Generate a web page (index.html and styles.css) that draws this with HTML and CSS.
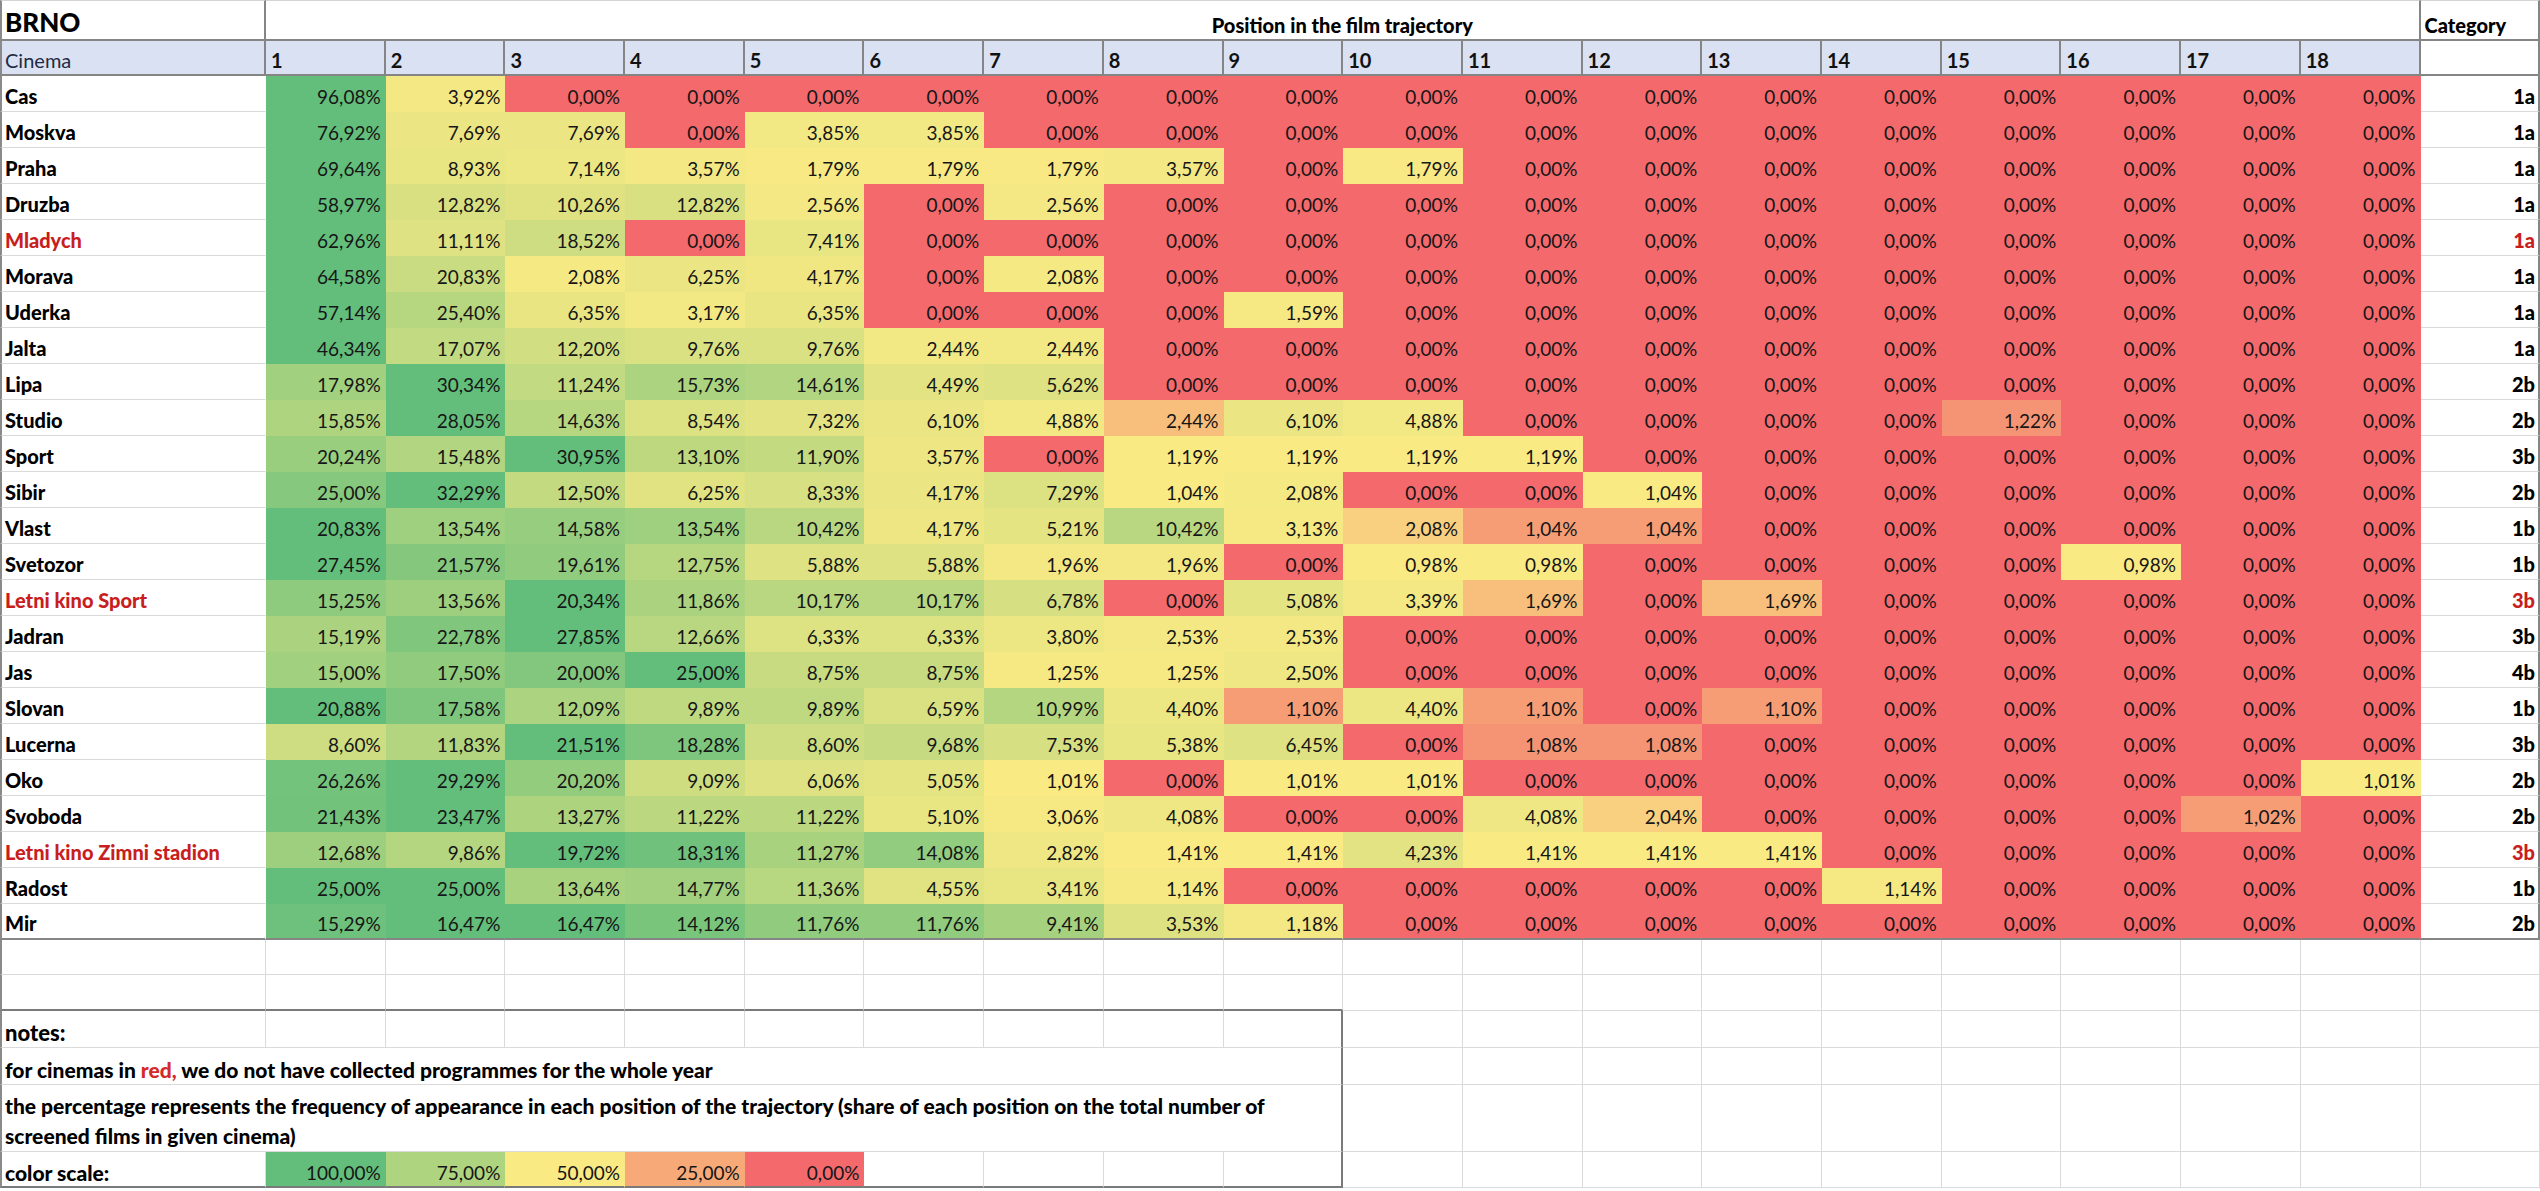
FILE: index.html
```html
<!DOCTYPE html>
<html lang="en">
<head>
<meta charset="utf-8">
<title>BRNO – Position in the film trajectory</title>
<link rel="stylesheet" href="styles.css">
</head>
<body>
<table class="sheet">
<colgroup>
<col class="c-name">
<col class="c-pos"><col class="c-pos"><col class="c-pos"><col class="c-pos"><col class="c-pos"><col class="c-pos">
<col class="c-pos"><col class="c-pos"><col class="c-pos"><col class="c-pos"><col class="c-pos"><col class="c-pos">
<col class="c-pos"><col class="c-pos"><col class="c-pos"><col class="c-pos"><col class="c-pos"><col class="c-pos">
<col class="c-cat">
</colgroup>
<tbody>
<tr class="title"><td class="brno">BRNO</td><td class="traj" colspan="18">Position in the film trajectory</td><td class="cathead">Category</td></tr>
<tr class="head"><td class="cinema">Cinema</td><td>1</td><td>2</td><td>3</td><td>4</td><td>5</td><td>6</td><td>7</td><td>8</td><td>9</td><td>10</td><td>11</td><td>12</td><td>13</td><td>14</td><td>15</td><td>16</td><td>17</td><td>18</td><td class="blank"></td></tr>

<tr class="data"><td class="name">Cas</td><td class="v">96,08%</td><td class="v">3,92%</td><td class="v">0,00%</td><td class="v">0,00%</td><td class="v">0,00%</td><td class="v">0,00%</td><td class="v">0,00%</td><td class="v">0,00%</td><td class="v">0,00%</td><td class="v">0,00%</td><td class="v">0,00%</td><td class="v">0,00%</td><td class="v">0,00%</td><td class="v">0,00%</td><td class="v">0,00%</td><td class="v">0,00%</td><td class="v">0,00%</td><td class="v">0,00%</td><td class="cat">1a</td></tr>
<tr class="data"><td class="name">Moskva</td><td class="v">76,92%</td><td class="v">7,69%</td><td class="v">7,69%</td><td class="v">0,00%</td><td class="v">3,85%</td><td class="v">3,85%</td><td class="v">0,00%</td><td class="v">0,00%</td><td class="v">0,00%</td><td class="v">0,00%</td><td class="v">0,00%</td><td class="v">0,00%</td><td class="v">0,00%</td><td class="v">0,00%</td><td class="v">0,00%</td><td class="v">0,00%</td><td class="v">0,00%</td><td class="v">0,00%</td><td class="cat">1a</td></tr>
<tr class="data"><td class="name">Praha</td><td class="v">69,64%</td><td class="v">8,93%</td><td class="v">7,14%</td><td class="v">3,57%</td><td class="v">1,79%</td><td class="v">1,79%</td><td class="v">1,79%</td><td class="v">3,57%</td><td class="v">0,00%</td><td class="v">1,79%</td><td class="v">0,00%</td><td class="v">0,00%</td><td class="v">0,00%</td><td class="v">0,00%</td><td class="v">0,00%</td><td class="v">0,00%</td><td class="v">0,00%</td><td class="v">0,00%</td><td class="cat">1a</td></tr>
<tr class="data"><td class="name">Druzba</td><td class="v">58,97%</td><td class="v">12,82%</td><td class="v">10,26%</td><td class="v">12,82%</td><td class="v">2,56%</td><td class="v">0,00%</td><td class="v">2,56%</td><td class="v">0,00%</td><td class="v">0,00%</td><td class="v">0,00%</td><td class="v">0,00%</td><td class="v">0,00%</td><td class="v">0,00%</td><td class="v">0,00%</td><td class="v">0,00%</td><td class="v">0,00%</td><td class="v">0,00%</td><td class="v">0,00%</td><td class="cat">1a</td></tr>
<tr class="data red"><td class="name">Mladych</td><td class="v">62,96%</td><td class="v">11,11%</td><td class="v">18,52%</td><td class="v">0,00%</td><td class="v">7,41%</td><td class="v">0,00%</td><td class="v">0,00%</td><td class="v">0,00%</td><td class="v">0,00%</td><td class="v">0,00%</td><td class="v">0,00%</td><td class="v">0,00%</td><td class="v">0,00%</td><td class="v">0,00%</td><td class="v">0,00%</td><td class="v">0,00%</td><td class="v">0,00%</td><td class="v">0,00%</td><td class="cat">1a</td></tr>
<tr class="data"><td class="name">Morava</td><td class="v">64,58%</td><td class="v">20,83%</td><td class="v">2,08%</td><td class="v">6,25%</td><td class="v">4,17%</td><td class="v">0,00%</td><td class="v">2,08%</td><td class="v">0,00%</td><td class="v">0,00%</td><td class="v">0,00%</td><td class="v">0,00%</td><td class="v">0,00%</td><td class="v">0,00%</td><td class="v">0,00%</td><td class="v">0,00%</td><td class="v">0,00%</td><td class="v">0,00%</td><td class="v">0,00%</td><td class="cat">1a</td></tr>
<tr class="data"><td class="name">Uderka</td><td class="v">57,14%</td><td class="v">25,40%</td><td class="v">6,35%</td><td class="v">3,17%</td><td class="v">6,35%</td><td class="v">0,00%</td><td class="v">0,00%</td><td class="v">0,00%</td><td class="v">1,59%</td><td class="v">0,00%</td><td class="v">0,00%</td><td class="v">0,00%</td><td class="v">0,00%</td><td class="v">0,00%</td><td class="v">0,00%</td><td class="v">0,00%</td><td class="v">0,00%</td><td class="v">0,00%</td><td class="cat">1a</td></tr>
<tr class="data"><td class="name">Jalta</td><td class="v">46,34%</td><td class="v">17,07%</td><td class="v">12,20%</td><td class="v">9,76%</td><td class="v">9,76%</td><td class="v">2,44%</td><td class="v">2,44%</td><td class="v">0,00%</td><td class="v">0,00%</td><td class="v">0,00%</td><td class="v">0,00%</td><td class="v">0,00%</td><td class="v">0,00%</td><td class="v">0,00%</td><td class="v">0,00%</td><td class="v">0,00%</td><td class="v">0,00%</td><td class="v">0,00%</td><td class="cat">1a</td></tr>
<tr class="data"><td class="name">Lipa</td><td class="v">17,98%</td><td class="v">30,34%</td><td class="v">11,24%</td><td class="v">15,73%</td><td class="v">14,61%</td><td class="v">4,49%</td><td class="v">5,62%</td><td class="v">0,00%</td><td class="v">0,00%</td><td class="v">0,00%</td><td class="v">0,00%</td><td class="v">0,00%</td><td class="v">0,00%</td><td class="v">0,00%</td><td class="v">0,00%</td><td class="v">0,00%</td><td class="v">0,00%</td><td class="v">0,00%</td><td class="cat">2b</td></tr>
<tr class="data"><td class="name">Studio</td><td class="v">15,85%</td><td class="v">28,05%</td><td class="v">14,63%</td><td class="v">8,54%</td><td class="v">7,32%</td><td class="v">6,10%</td><td class="v">4,88%</td><td class="v">2,44%</td><td class="v">6,10%</td><td class="v">4,88%</td><td class="v">0,00%</td><td class="v">0,00%</td><td class="v">0,00%</td><td class="v">0,00%</td><td class="v">1,22%</td><td class="v">0,00%</td><td class="v">0,00%</td><td class="v">0,00%</td><td class="cat">2b</td></tr>
<tr class="data"><td class="name">Sport</td><td class="v">20,24%</td><td class="v">15,48%</td><td class="v">30,95%</td><td class="v">13,10%</td><td class="v">11,90%</td><td class="v">3,57%</td><td class="v">0,00%</td><td class="v">1,19%</td><td class="v">1,19%</td><td class="v">1,19%</td><td class="v">1,19%</td><td class="v">0,00%</td><td class="v">0,00%</td><td class="v">0,00%</td><td class="v">0,00%</td><td class="v">0,00%</td><td class="v">0,00%</td><td class="v">0,00%</td><td class="cat">3b</td></tr>
<tr class="data"><td class="name">Sibir</td><td class="v">25,00%</td><td class="v">32,29%</td><td class="v">12,50%</td><td class="v">6,25%</td><td class="v">8,33%</td><td class="v">4,17%</td><td class="v">7,29%</td><td class="v">1,04%</td><td class="v">2,08%</td><td class="v">0,00%</td><td class="v">0,00%</td><td class="v">1,04%</td><td class="v">0,00%</td><td class="v">0,00%</td><td class="v">0,00%</td><td class="v">0,00%</td><td class="v">0,00%</td><td class="v">0,00%</td><td class="cat">2b</td></tr>
<tr class="data"><td class="name">Vlast</td><td class="v">20,83%</td><td class="v">13,54%</td><td class="v">14,58%</td><td class="v">13,54%</td><td class="v">10,42%</td><td class="v">4,17%</td><td class="v">5,21%</td><td class="v">10,42%</td><td class="v">3,13%</td><td class="v">2,08%</td><td class="v">1,04%</td><td class="v">1,04%</td><td class="v">0,00%</td><td class="v">0,00%</td><td class="v">0,00%</td><td class="v">0,00%</td><td class="v">0,00%</td><td class="v">0,00%</td><td class="cat">1b</td></tr>
<tr class="data"><td class="name">Svetozor</td><td class="v">27,45%</td><td class="v">21,57%</td><td class="v">19,61%</td><td class="v">12,75%</td><td class="v">5,88%</td><td class="v">5,88%</td><td class="v">1,96%</td><td class="v">1,96%</td><td class="v">0,00%</td><td class="v">0,98%</td><td class="v">0,98%</td><td class="v">0,00%</td><td class="v">0,00%</td><td class="v">0,00%</td><td class="v">0,00%</td><td class="v">0,98%</td><td class="v">0,00%</td><td class="v">0,00%</td><td class="cat">1b</td></tr>
<tr class="data red"><td class="name">Letni kino Sport</td><td class="v">15,25%</td><td class="v">13,56%</td><td class="v">20,34%</td><td class="v">11,86%</td><td class="v">10,17%</td><td class="v">10,17%</td><td class="v">6,78%</td><td class="v">0,00%</td><td class="v">5,08%</td><td class="v">3,39%</td><td class="v">1,69%</td><td class="v">0,00%</td><td class="v">1,69%</td><td class="v">0,00%</td><td class="v">0,00%</td><td class="v">0,00%</td><td class="v">0,00%</td><td class="v">0,00%</td><td class="cat">3b</td></tr>
<tr class="data"><td class="name">Jadran</td><td class="v">15,19%</td><td class="v">22,78%</td><td class="v">27,85%</td><td class="v">12,66%</td><td class="v">6,33%</td><td class="v">6,33%</td><td class="v">3,80%</td><td class="v">2,53%</td><td class="v">2,53%</td><td class="v">0,00%</td><td class="v">0,00%</td><td class="v">0,00%</td><td class="v">0,00%</td><td class="v">0,00%</td><td class="v">0,00%</td><td class="v">0,00%</td><td class="v">0,00%</td><td class="v">0,00%</td><td class="cat">3b</td></tr>
<tr class="data"><td class="name">Jas</td><td class="v">15,00%</td><td class="v">17,50%</td><td class="v">20,00%</td><td class="v">25,00%</td><td class="v">8,75%</td><td class="v">8,75%</td><td class="v">1,25%</td><td class="v">1,25%</td><td class="v">2,50%</td><td class="v">0,00%</td><td class="v">0,00%</td><td class="v">0,00%</td><td class="v">0,00%</td><td class="v">0,00%</td><td class="v">0,00%</td><td class="v">0,00%</td><td class="v">0,00%</td><td class="v">0,00%</td><td class="cat">4b</td></tr>
<tr class="data"><td class="name">Slovan</td><td class="v">20,88%</td><td class="v">17,58%</td><td class="v">12,09%</td><td class="v">9,89%</td><td class="v">9,89%</td><td class="v">6,59%</td><td class="v">10,99%</td><td class="v">4,40%</td><td class="v">1,10%</td><td class="v">4,40%</td><td class="v">1,10%</td><td class="v">0,00%</td><td class="v">1,10%</td><td class="v">0,00%</td><td class="v">0,00%</td><td class="v">0,00%</td><td class="v">0,00%</td><td class="v">0,00%</td><td class="cat">1b</td></tr>
<tr class="data"><td class="name">Lucerna</td><td class="v">8,60%</td><td class="v">11,83%</td><td class="v">21,51%</td><td class="v">18,28%</td><td class="v">8,60%</td><td class="v">9,68%</td><td class="v">7,53%</td><td class="v">5,38%</td><td class="v">6,45%</td><td class="v">0,00%</td><td class="v">1,08%</td><td class="v">1,08%</td><td class="v">0,00%</td><td class="v">0,00%</td><td class="v">0,00%</td><td class="v">0,00%</td><td class="v">0,00%</td><td class="v">0,00%</td><td class="cat">3b</td></tr>
<tr class="data"><td class="name">Oko</td><td class="v">26,26%</td><td class="v">29,29%</td><td class="v">20,20%</td><td class="v">9,09%</td><td class="v">6,06%</td><td class="v">5,05%</td><td class="v">1,01%</td><td class="v">0,00%</td><td class="v">1,01%</td><td class="v">1,01%</td><td class="v">0,00%</td><td class="v">0,00%</td><td class="v">0,00%</td><td class="v">0,00%</td><td class="v">0,00%</td><td class="v">0,00%</td><td class="v">0,00%</td><td class="v">1,01%</td><td class="cat">2b</td></tr>
<tr class="data"><td class="name">Svoboda</td><td class="v">21,43%</td><td class="v">23,47%</td><td class="v">13,27%</td><td class="v">11,22%</td><td class="v">11,22%</td><td class="v">5,10%</td><td class="v">3,06%</td><td class="v">4,08%</td><td class="v">0,00%</td><td class="v">0,00%</td><td class="v">4,08%</td><td class="v">2,04%</td><td class="v">0,00%</td><td class="v">0,00%</td><td class="v">0,00%</td><td class="v">0,00%</td><td class="v">1,02%</td><td class="v">0,00%</td><td class="cat">2b</td></tr>
<tr class="data red"><td class="name">Letni kino Zimni stadion</td><td class="v">12,68%</td><td class="v">9,86%</td><td class="v">19,72%</td><td class="v">18,31%</td><td class="v">11,27%</td><td class="v">14,08%</td><td class="v">2,82%</td><td class="v">1,41%</td><td class="v">1,41%</td><td class="v">4,23%</td><td class="v">1,41%</td><td class="v">1,41%</td><td class="v">1,41%</td><td class="v">0,00%</td><td class="v">0,00%</td><td class="v">0,00%</td><td class="v">0,00%</td><td class="v">0,00%</td><td class="cat">3b</td></tr>
<tr class="data"><td class="name">Radost</td><td class="v">25,00%</td><td class="v">25,00%</td><td class="v">13,64%</td><td class="v">14,77%</td><td class="v">11,36%</td><td class="v">4,55%</td><td class="v">3,41%</td><td class="v">1,14%</td><td class="v">0,00%</td><td class="v">0,00%</td><td class="v">0,00%</td><td class="v">0,00%</td><td class="v">0,00%</td><td class="v">1,14%</td><td class="v">0,00%</td><td class="v">0,00%</td><td class="v">0,00%</td><td class="v">0,00%</td><td class="cat">1b</td></tr>
<tr class="data last"><td class="name">Mir</td><td class="v">15,29%</td><td class="v">16,47%</td><td class="v">16,47%</td><td class="v">14,12%</td><td class="v">11,76%</td><td class="v">11,76%</td><td class="v">9,41%</td><td class="v">3,53%</td><td class="v">1,18%</td><td class="v">0,00%</td><td class="v">0,00%</td><td class="v">0,00%</td><td class="v">0,00%</td><td class="v">0,00%</td><td class="v">0,00%</td><td class="v">0,00%</td><td class="v">0,00%</td><td class="v">0,00%</td><td class="cat">2b</td></tr>

<tr class="empty e1"><td></td><td></td><td></td><td></td><td></td><td></td><td></td><td></td><td></td><td></td><td></td><td></td><td></td><td></td><td></td><td></td><td></td><td></td><td></td><td></td></tr>
<tr class="empty e2"><td class="bt"></td><td class="bt"></td><td class="bt"></td><td class="bt"></td><td class="bt"></td><td class="bt"></td><td class="bt"></td><td class="bt"></td><td class="bt"></td><td class="bt"></td><td></td><td></td><td></td><td></td><td></td><td></td><td></td><td></td><td></td><td></td></tr>

<tr class="n1"><td class="notes">notes:</td><td></td><td></td><td></td><td></td><td></td><td></td><td></td><td></td><td class="br"></td><td></td><td></td><td></td><td></td><td></td><td></td><td></td><td></td><td></td><td></td></tr>
<tr class="n2"><td class="note br" colspan="10">for cinemas in <span class="hl">red,</span> we do not have collected programmes for the whole year</td><td></td><td></td><td></td><td></td><td></td><td></td><td></td><td></td><td></td><td></td></tr>
<tr class="n3"><td class="note br" colspan="10">the percentage represents the frequency of appearance in each position of the trajectory (share of each position on the total number of<br>screened films in given cinema)</td><td></td><td></td><td></td><td></td><td></td><td></td><td></td><td></td><td></td><td></td></tr>
<tr class="n4 scale"><td class="scale-label bb">color scale:</td><td class="v bb">100,00%</td><td class="v bb">75,00%</td><td class="v bb">50,00%</td><td class="v bb">25,00%</td><td class="v bb">0,00%</td><td class="bb"></td><td class="bb"></td><td class="bb"></td><td class="bb br"></td><td></td><td></td><td></td><td></td><td></td><td></td><td></td><td></td><td></td><td></td></tr>
</tbody>
</table>
<script src="script.js"></script>
</body>
</html>
```

FILE: styles.css
```css
html, body {
  margin: 0;
  padding: 0;
  background: #ffffff;
}

body {
  font-family: Lato, "Open Sans", "Liberation Sans", sans-serif;
  color: #161616;
}

.sheet {
  border-collapse: separate;
  border-spacing: 0;
  table-layout: fixed;
  width: 2540px;
  font-size: 19px;
}

.c-name { width: 266px; }
.c-pos { width: 119.7px; }
.c-cat { width: 119.4px; }

.sheet td {
  box-sizing: border-box;
  padding: 0 4px 3px 4px;
  border-right: 1px solid #dadada;
  border-bottom: 1px solid #dadada;
  vertical-align: bottom;
  line-height: 23px;
  white-space: nowrap;
  overflow: hidden;
}

.sheet td:first-child {
  border-left: 2px solid #8a8a8a;
  padding-left: 3px;
}

/* title row */
.sheet tr.title td {
  height: 41px;
  border-top: 1px solid #d4d4d4;
  border-bottom: 2px solid #858585;
  border-right: 2px solid #858585;
  padding-bottom: 2px;
  font-size: 20px;
  font-weight: 900;
  color: #000;
}

.sheet tr.title td.brno {
  font-size: 26px;
  line-height: 31px;
  padding-bottom: 1px;
}

.sheet td.traj {
  text-align: center;
}

/* column header row */
.sheet tr.head td {
  height: 35px;
  background: #d9e1f2;
  border-right: 2px solid #858585;
  border-bottom: 2px solid #858585;
  padding-bottom: 2px;
  padding-left: 5px;
  font-size: 20px;
  font-weight: 700;
  color: #111;
}

.sheet tr.head td.cinema {
  font-weight: 400;
  color: #1f2b45;
  padding-left: 3px;
}

.sheet tr.head td.blank {
  background: #ffffff;
}

/* data rows */
.sheet tr.data td {
  height: 36px;
}

.sheet td.name {
  font-size: 20px;
  font-weight: 900;
  color: #000;
  border-right-color: transparent;
}

.sheet td.v {
  text-align: right;
  border-color: transparent;
  color: #161616;
}

.sheet td.cat {
  text-align: right;
  font-size: 20px;
  font-weight: 900;
  color: #000;
  border-right: 2px solid #858585;
  padding-right: 3px;
}

.sheet tr.red td.name,
.sheet tr.red td.cat {
  color: #c81e1e;
}

.sheet tr.last td {
  border-bottom: 2px solid #858585;
}

/* empty spreadsheet rows */
.sheet tr.e1 td { height: 35px; }
.sheet tr.e2 td { height: 36px; }

.sheet td.bt {
  border-bottom: 2px solid #7a7a7a;
}

/* notes box */
.sheet tr.n1 td { height: 37px; }
.sheet tr.n2 td { height: 37px; }
.sheet tr.n3 td {
  height: 67px;
  line-height: 30px;
  padding-bottom: 0;
}
.sheet tr.n4 td {
  height: 36px;
  padding-bottom: 2px;
}

.sheet td.notes,
.sheet td.note,
.sheet td.scale-label {
  font-size: 21px;
  font-weight: 900;
  color: #000;
}

.sheet td.notes {
  font-size: 22px;
}

.hl {
  color: #d42a2a;
}

.sheet td.br {
  border-right: 2px solid #7a7a7a;
}

.sheet td.bb {
  border-bottom: 2px solid #7a7a7a;
}

.sheet tr.n4 td.v {
  border-right-color: transparent;
  font-weight: 400;
}
```

FILE: script.js
```javascript
(function () {
  var RED = [243, 105, 108];
  var YELLOW = [250, 234, 132];
  var GREEN = [99, 190, 123];

  function mix(a, b, t) {
    return 'rgb(' + [0, 1, 2].map(function (i) {
      return Math.round(a[i] + (b[i] - a[i]) * t);
    }).join(',') + ')';
  }

  var rows = document.querySelectorAll('tr.data, tr.scale');
  rows.forEach(function (row) {
    var cells = Array.prototype.slice.call(row.querySelectorAll('td.v'));
    var vals = cells.map(function (c) {
      return parseFloat(c.textContent.replace(',', '.').replace('%', ''));
    });
    var sorted = vals.slice().sort(function (a, b) { return a - b; });
    var min = sorted[0];
    var max = sorted[sorted.length - 1];
    var rank = 0.5 * (sorted.length - 1);
    var lo = Math.floor(rank);
    var hi = Math.ceil(rank);
    var mid = sorted[lo] + (sorted[hi] - sorted[lo]) * (rank - lo);
    cells.forEach(function (c, i) {
      var v = vals[i];
      var col;
      if (v <= min) {
        col = mix(RED, RED, 0);
      } else if (v >= max) {
        col = mix(GREEN, GREEN, 0);
      } else if (v < mid) {
        col = mix(RED, YELLOW, (v - min) / (mid - min));
      } else {
        col = mix(YELLOW, GREEN, max === mid ? 1 : (v - mid) / (max - mid));
      }
      c.style.backgroundColor = col;
    });
  });
})();
```
